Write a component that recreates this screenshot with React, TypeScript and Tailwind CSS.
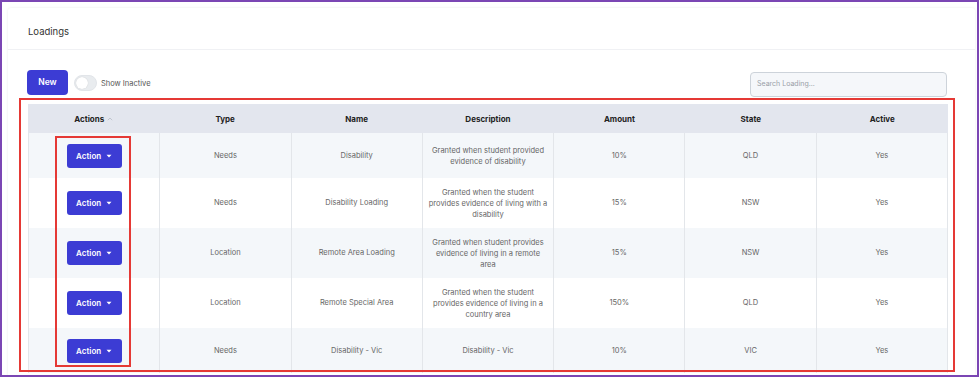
import React from "react";

const rows = [
  { type: "Needs", name: "Disability", desc: ["Granted when student provided", "evidence of disability"], amount: "10%", state: "QLD", active: "Yes", h: "h-[45px]" },
  { type: "Needs", name: "Disability Loading", desc: ["Granted when the student", "provides evidence of living with a", "disability"], amount: "15%", state: "NSW", active: "Yes", h: "h-[50px]" },
  { type: "Location", name: "Remote Area Loading", desc: ["Granted when student provides", "evidence of living in a remote", "area"], amount: "15%", state: "NSW", active: "Yes", h: "h-[50px]" },
  { type: "Location", name: "Remote Special Area", desc: ["Granted when the student", "provides evidence of living in a", "country area"], amount: "150%", state: "QLD", active: "Yes", h: "h-[50px]" },
  { type: "Needs", name: "Disability - Vic", desc: ["Disability - Vic"], amount: "10%", state: "VIC", active: "Yes", h: "h-[45px]" },
];

function Caret() {
  return (
    <svg width="6" height="4" viewBox="0 0 6 4" className="ml-[5px]">
      <path d="M0.5 0.8 L5.5 0.8 L3 3.4 Z" fill="white" />
    </svg>
  );
}

export default function App() {
  return (
    <div className="relative w-[979px] h-[377px] overflow-hidden border-2 border-[#7b46b4] bg-white font-['Inter',sans-serif]">
      <div className="ml-[6px] mt-[6px] mr-[2px] bg-white rounded-[3px] shadow-[0_0_3px_rgba(0,0,0,0.08)] pb-4">
        <div className="h-[42px] flex items-center pl-[20px] pt-[8px] border-b border-[#f0f1f4]">
          <span className="text-[9.5px] text-[#333]">Loadings</span>
        </div>
        <div className="flex items-start pl-[19px] pr-[28px] pt-[20px]">
          <button className="w-[41px] h-[25px] rounded-[4px] bg-[#3c3cd4] text-white text-[8.5px] font-semibold">New</button>
          <div className="ml-[6px] mt-[5px] w-[23px] h-[16px] rounded-full bg-[#e9ecef] border border-[#e2e5e9] flex items-center px-[1px]">
            <div className="w-[12px] h-[12px] rounded-full bg-white shadow-[0_0_1px_rgba(0,0,0,0.2)]" />
          </div>
          <span className="ml-[4px] mt-[8px] text-[7.5px] text-[#555]">Show Inactive</span>
          <div className="ml-auto mt-[2px] w-[197px] h-[25px] rounded-[4px] border border-[#cdd3da] bg-[#f5f7fa] flex items-center pl-[6px]">
            <span className="text-[7px] text-[#9aa0a8]">Search Loading...</span>
          </div>
        </div>
        <div className="ml-[20px] mt-[7px] w-[920px]">
          <div className="grid grid-cols-7 h-[29px] bg-[#e3e6ee] text-[8px] font-bold text-[#222]">
            <div className="flex items-center justify-center">
              Actions
              <svg width="6" height="4" viewBox="0 0 6 4" className="ml-[3px]">
                <path d="M0.8 3.2 L3 1 L5.2 3.2" fill="none" stroke="#b8bcc6" strokeWidth="0.8" />
              </svg>
            </div>
            <div className="flex items-center justify-center">Type</div>
            <div className="flex items-center justify-center">Name</div>
            <div className="flex items-center justify-center">Description</div>
            <div className="flex items-center justify-center">Amount</div>
            <div className="flex items-center justify-center">State</div>
            <div className="flex items-center justify-center">Active</div>
          </div>
          {rows.map((r, i) => (
            <div
              key={i}
              className={`grid grid-cols-7 ${r.h} ${i % 2 === 0 ? "bg-[#f4f7fa]" : "bg-white"} text-[7.5px] text-[#666] border-l border-[#e3e6ea]`}
            >
              <div className="flex items-center justify-center border-r border-[#e3e6ea]">
                <button className="w-[55px] h-[24px] rounded-[3px] bg-[#3c3cd4] text-white text-[8px] font-semibold flex items-center justify-center">
                  Action
                  <Caret />
                </button>
              </div>
              <div className="flex items-center justify-center border-r border-[#e3e6ea]">{r.type}</div>
              <div className="flex items-center justify-center border-r border-[#e3e6ea]">{r.name}</div>
              <div className="flex flex-col items-center justify-center border-r border-[#e3e6ea] leading-[11px] text-center whitespace-nowrap">
                {r.desc.map((l, j) => (
                  <span key={j}>{l}</span>
                ))}
              </div>
              <div className="flex items-center justify-center border-r border-[#e3e6ea]">{r.amount}</div>
              <div className="flex items-center justify-center border-r border-[#e3e6ea]">{r.state}</div>
              <div className="flex items-center justify-center border-r border-[#e3e6ea]">{r.active}</div>
            </div>
          ))}
        </div>
      </div>
      <div className="absolute left-[17px] top-[96px] w-[936px] h-[274px] border-2 border-[#e53935] pointer-events-none" />
      <div className="absolute left-[53px] top-[134px] w-[76px] h-[231px] border-2 border-[#e53935] pointer-events-none" />
    </div>
  );
}
